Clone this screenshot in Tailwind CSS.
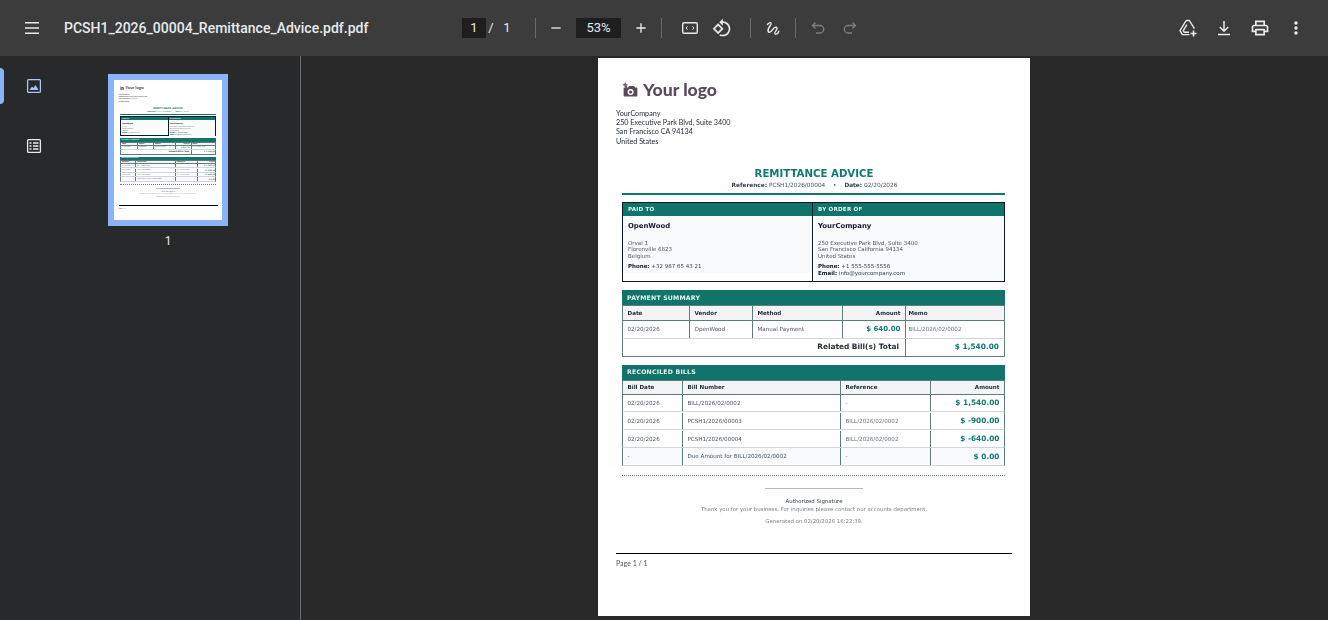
<!DOCTYPE html>
<html lang="en">
<head>
  <meta charset="UTF-8" />
  <title>PCSH1_2026_00004_Remittance_Advice.pdf.pdf</title>
  <script src="https://cdn.jsdelivr.net/npm/@tailwindcss/browser@4"></script>
</head>
<body class="h-[620px] w-[1328px] overflow-hidden bg-[#282828] font-['Roboto',sans-serif] text-[#e8eaed]">

  <!-- Toolbar -->
  <header class="flex h-[56px] items-center bg-[#3c3c3c]">
    <svg class="ml-[20px] h-[24px] w-[24px] fill-[#e8eaed]" viewBox="0 0 24 24"><path d="M5 18h14v-1.5H5V18zm0-5.2h14v-1.5H5v1.5zM5 6v1.5h14V6H5z"/></svg>
    <div class="ml-[20px] w-[398px] text-[14px] font-medium whitespace-nowrap">PCSH1_2026_00004_Remittance_Advice.pdf.pdf</div>

    <div class="flex h-[20px] w-[24px] items-center justify-center bg-[#1e1e1e] text-[13px]">1</div>
    <span class="w-[10px] text-center text-[13px]">/</span>
    <span class="ml-[6px] w-[10px] text-center text-[13px]">1</span>
    <div class="ml-[23px] h-[20px] w-px bg-[#6a6a6a]"></div>

    <svg class="ml-[12px] h-[16px] w-[16px] fill-[#e8eaed]" viewBox="0 0 24 24"><path d="M19 13H5v-2h14v2z"/></svg>
    <div class="ml-[12px] flex h-[20px] w-[45px] items-center justify-center bg-[#1e1e1e] text-[13px]">53%</div>
    <svg class="ml-[12px] h-[16px] w-[16px] fill-[#e8eaed]" viewBox="0 0 24 24"><path d="M19 13h-6v6h-2v-6H5v-2h6V5h2v6h6v2z"/></svg>
    <div class="ml-[12px] h-[20px] w-px bg-[#6a6a6a]"></div>

    <svg class="ml-[19px] h-[18px] w-[18px] text-[#e8eaed]" viewBox="0 0 18 18" fill="none" stroke="currentColor"><rect x="1.7" y="3.7" width="14.6" height="10.6" rx="1.4" stroke-width="1.4"/><path d="M6.6 7.4 5 9l1.6 1.6M11.4 7.4 13 9l-1.6 1.6" stroke-width="1"/></svg>
    <svg class="ml-[13px] h-[20px] w-[20px] fill-[#e8eaed]" viewBox="0 0 24 24"><path d="M7.34 6.41L.86 12.9l6.49 6.48 6.49-6.48-6.5-6.49zM3.69 12.9l3.66-3.66L11 12.9l-3.66 3.66-3.65-3.66zm15.67-6.26C17.61 4.88 15.3 4 13 4V.76L8.76 5 13 9.24V6c1.79 0 3.58.68 4.95 2.05 2.73 2.73 2.73 7.17 0 9.9C16.58 19.32 14.79 20 13 20c-.97 0-1.94-.21-2.84-.61l-1.49 1.49C10.02 21.62 11.51 22 13 22c2.3 0 4.61-.88 6.36-2.64 3.52-3.51 3.52-9.21 0-12.72z"/></svg>
    <div class="ml-[18px] h-[20px] w-px bg-[#6a6a6a]"></div>

    <svg class="ml-[13px] h-[18px] w-[18px] text-[#e8eaed]" viewBox="0 0 18 18" fill="none" stroke="currentColor" stroke-width="1.4" stroke-linecap="round"><path d="M3.5 5.5c1.2-1.6 3-2.4 3.6-1.4.9 1.5-4 5-3 8.2.7 2.1 3.4.3 5-2.2 1-1.6 3.2-2.5 3.9-1 .6 1.5-2.8 4-2.2 5.4.6 1.3 3.6.5 4-2.3"/></svg>
    <div class="ml-[13px] h-[20px] w-px bg-[#6a6a6a]"></div>

    <svg class="ml-[14px] h-[16px] w-[16px] text-[#7f7f7f]" viewBox="0 0 16 16" fill="none" stroke="currentColor" stroke-width="1.3"><path d="M5.5 2.5 2.5 5.5l3 3M2.5 5.5H10a3.6 3.6 0 0 1 0 7.5H6"/></svg>
    <svg class="ml-[16px] h-[16px] w-[16px] text-[#7f7f7f]" viewBox="0 0 16 16" fill="none" stroke="currentColor" stroke-width="1.3"><path d="M10.5 2.5l3 3-3 3M13.5 5.5H6a3.6 3.6 0 0 0 0 7.5h4"/></svg>

    <svg class="ml-[320px] h-[20px] w-[20px] text-[#e8eaed]" viewBox="0 0 20 20" fill="none" stroke="currentColor" stroke-width="1.4" stroke-linejoin="round"><path d="M8.2 2.5h3.2l5 8.2M8.2 2.5 2 12.6l2.4 4h7M8.8 6.6l-3.5 6 1 1.7H11"/><path d="M15.5 12.5v6M12.5 15.5h6" stroke-width="1.6"/></svg>
    <svg class="ml-[16px] h-[20px] w-[20px] text-[#e8eaed]" viewBox="0 0 20 20" fill="none" stroke="currentColor" stroke-width="1.5"><path d="M10 3v10M5.8 9 10 13.2 14.2 9M4 16.5h12"/></svg>
    <svg class="ml-[16px] h-[20px] w-[20px] fill-[#e8eaed]" viewBox="0 0 24 24"><path d="M19 8h-1V3H6v5H5c-1.66 0-3 1.34-3 3v6h4v4h12v-4h4v-6c0-1.66-1.34-3-3-3zM8 5h8v3H8V5zm8 12v2H8v-4h8v2zm2-2v-2H6v2H4v-4c0-.55.45-1 1-1h14c.55 0 1 .45 1 1v4h-2z"/></svg>
    <svg class="ml-[16px] h-[20px] w-[20px] fill-[#e8eaed]" viewBox="0 0 24 24"><path d="M12 8c1.1 0 2-.9 2-2s-.9-2-2-2-2 .9-2 2 .9 2 2 2zm0 2c-1.1 0-2 .9-2 2s.9 2 2 2 2-.9 2-2-.9-2-2-2zm0 6c-1.1 0-2 .9-2 2s.9 2 2 2 2-.9 2-2-.9-2-2-2z"/></svg>
  </header>

  <div class="flex h-[564px]">
    <!-- Sidebar -->
    <aside class="flex w-[301px] shrink-0 border-r border-[#6b6b6b] bg-[#28292a]">
      <div class="relative w-[68px] shrink-0">
        <div class="absolute top-[12px] left-0 h-[36px] w-[4px] rounded-r bg-[#8ab4f8]"></div>
        <svg class="absolute top-[22px] left-[26px] h-[16px] w-[16px] text-[#a8c7fa]" viewBox="0 0 16 16" fill="none" stroke="currentColor" stroke-width="1.3"><rect x="1.6" y="1.6" width="12.8" height="12.8" rx="1"/><path class="fill-[#a8c7fa]" stroke="none" d="M3.5 12 6 8.5l1.5 1.6L9.5 7l3 5z"/></svg>
        <svg class="absolute top-[82px] left-[26px] h-[16px] w-[16px] text-[#e8eaed]" viewBox="0 0 16 16" fill="none" stroke="currentColor" stroke-width="1.3"><rect x="1.6" y="1.6" width="12.8" height="12.8" rx="1"/><path d="M3.5 5h2M7 5h5.5M3.5 8h2M7 8h5.5M3.5 11h2M7 11h5.5"/></svg>
      </div>
      <div class="ml-[40px] pt-[18px]">
        <div class="h-[152px] w-[120px] border-[6px] border-[#8ab4f8] bg-white">
          <div id="thumb" class="h-[140px] w-[108px] overflow-hidden"></div>
        </div>
        <div class="mt-[6px] text-center text-[12px]">1</div>
      </div>
    </aside>

    <!-- Page -->
    <main class="flex-1 pt-[2px] pl-[297px]">
      <div id="sheet" class="h-[558px] w-[432px] overflow-hidden bg-white pt-[23px] font-['DejaVu_Sans',sans-serif] text-[#374151] blur-[0.3px]">
        <div class="ml-[24px] flex h-[18px] items-center font-['Lato',sans-serif] text-[17.6px] leading-none font-black text-[#5a4a5e]">
          <svg class="h-[16px] w-[16px] fill-[#5a4a5e]" viewBox="0 0 16 16"><path d="M2.6 0.6h1.2V2.2h1.6v1.2H3.8V5H2.6V3.4H1V2.2h1.6z"/><path fill-rule="evenodd" d="M1.6 5.6h1.6l1-2h.6v1.8h1.6L7 4h5l1 1.6h1.4c.6 0 1 .5 1 1v7c0 .6-.4 1-1 1H2.6c-.6 0-1-.4-1-1zM8.6 7a3 3 0 1 0 0 6 3 3 0 0 0 0-6zm0 1.4a1.6 1.6 0 1 1 0 3.2 1.6 1.6 0 0 1 0-3.2z"/></svg>
          <span class="ml-[5px]">Your logo</span>
        </div>

        <div class="mt-[10px] ml-[18px] font-['Lato',sans-serif] text-[7.2px] leading-[9.2px] text-[#1f2937]">
          <div>YourCompany</div>
          <div>250 Executive Park Blvd, Suite 3400</div>
          <div>San Francisco CA 94134</div>
          <div>United States</div>
        </div>

        <div class="mt-[22px] text-center text-[10.2px] leading-[12px] font-bold text-[#0f7a70]">REMITTANCE ADVICE</div>
        <div class="mt-[1px] pl-[1px] text-center text-[5.8px] leading-[8px] text-[#4b5563]"><b class="text-[#374151]">Reference:</b> PCSH1/2026/00004 <span class="mx-[6px]">•</span> <b class="text-[#374151]">Date:</b> 02/20/2026</div>

        <div class="mt-[4px] mr-[25px] ml-[24px] h-[2px] bg-[#0f766e]"></div>

        <!-- Parties -->
        <div class="mt-[7px] mr-[25px] ml-[24px] flex h-[80px] border border-[#111827] text-[5.5px] leading-[6.6px]">
          <div class="w-[190px] border-r border-[#111827]">
            <div class="flex h-[13px] items-center bg-[#11746b] pl-[5px] text-[5.6px] font-bold tracking-[0.2px] text-[#e6f4f1]">PAID TO</div>
            <div class="h-[57px] bg-[#f8fafc] pt-[6px] pl-[5px]">
              <div class="text-[6.9px] leading-[9px] font-bold text-[#111827]">OpenWood</div>
              <div class="mt-[9px] text-[#4b5563]">Orval 1<br>Florenville 6823<br>Belgium</div>
              <div class="mt-[3px] leading-[7px] text-[#374151]"><b class="text-[#111827]">Phone:</b> +32 987 65 43 21</div>
            </div>
          </div>
          <div class="flex-1">
            <div class="flex h-[13px] items-center bg-[#11746b] pl-[5px] text-[5.6px] font-bold tracking-[0.2px] text-[#e6f4f1]">BY ORDER OF</div>
            <div class="h-[65px] bg-[#f8fafc] pt-[6px] pl-[5px]">
              <div class="text-[6.9px] leading-[9px] font-bold text-[#111827]">YourCompany</div>
              <div class="mt-[9px] text-[#4b5563]">250 Executive Park Blvd, Suite 3400<br>San Francisco California 94134<br>United States</div>
              <div class="mt-[3px] leading-[7px] text-[#374151]"><b class="text-[#111827]">Phone:</b> +1 555-555-5556<br><b class="text-[#111827]">Email:</b> info@yourcompany.com</div>
            </div>
          </div>
        </div>

        <!-- Payment summary -->
        <div class="mt-[8px] mr-[25px] ml-[24px] text-[5.6px]">
          <div class="flex h-[15px] items-center bg-[#11746b] pl-[5px] text-[6.2px] font-bold tracking-[0.2px] text-[#e6f4f1]">PAYMENT SUMMARY</div>
          <div class="grid h-[16px] grid-cols-[67px_63px_90px_63px_98px] border-x border-y border-[#5f7d78] bg-[#f3f4f6] font-bold text-[#1f2937] *:flex *:items-center *:border-r *:border-[#5f7d78] *:px-[4.5px] *:last:border-r-0 *:last:pl-[2.5px]">
            <div>Date</div><div>Vendor</div><div>Method</div><div class="justify-end">Amount</div><div>Memo</div>
          </div>
          <div class="grid h-[18px] grid-cols-[67px_63px_90px_63px_98px] border-x border-b border-x-[#5f7d78] border-b-[#d1d5db] text-[#4b5563] *:flex *:items-center *:border-r *:border-[#5f7d78] *:px-[4.5px] *:last:border-r-0 *:last:pl-[2.5px]">
            <div>02/20/2026</div><div>OpenWood</div><div>Manual Payment</div><div class="justify-end text-[7px] font-bold text-[#0f7a70]">$ 640.00</div><div class="text-[#6b7280]">BILL/2026/02/0002</div>
          </div>
          <div class="grid h-[18px] grid-cols-[283px_98px] border-x border-b border-[#5f7d78] *:flex *:items-center *:justify-end">
            <div class="border-r border-[#5f7d78] pr-[6px] pb-[1px] text-[7.4px] font-bold text-[#1f2937]">Related Bill(s) Total</div>
            <div class="pr-[5px] pb-[1px] text-[7.4px] font-bold text-[#0f7a70]">$ 1,540.00</div>
          </div>
        </div>

        <!-- Reconciled bills -->
        <div class="mt-[8px] mr-[25px] ml-[24px] text-[5.6px]">
          <div class="flex h-[15px] items-center bg-[#11746b] pb-[1px] pl-[5px] text-[6.2px] font-bold tracking-[0.2px] text-[#e6f4f1]">RECONCILED BILLS</div>
          <div class="grid h-[15px] grid-cols-[60px_158px_90px_73px] border-x border-y border-[#5f7d78] bg-[#f3f4f6] font-bold text-[#1f2937] *:flex *:items-center *:border-r *:border-[#5f7d78] *:px-[4.5px] *:last:border-r-0">
            <div>Bill Date</div><div>Bill Number</div><div>Reference</div><div class="justify-end">Amount</div>
          </div>
          <div class="grid h-[17px] grid-cols-[60px_158px_90px_73px] border-x border-b border-x-[#5f7d78] border-b-[#d1d5db] text-[#4b5563] *:flex *:items-center *:border-r *:border-[#5f7d78] *:px-[4.5px] *:last:border-r-0">
            <div>02/20/2026</div><div>BILL/2026/02/0002</div><div class="text-[#6b7280]">-</div><div class="justify-end text-[7.4px] font-bold text-[#0f7a70]">$ 1,540.00</div>
          </div>
          <div class="grid h-[18px] grid-cols-[60px_158px_90px_73px] border-x border-b border-x-[#5f7d78] border-b-[#d1d5db] pt-[1px] text-[#4b5563] *:flex *:items-center *:border-r *:border-[#5f7d78] *:px-[4.5px] *:last:border-r-0">
            <div>02/20/2026</div><div>PCSH1/2026/00003</div><div class="text-[#6b7280]">BILL/2026/02/0002</div><div class="justify-end text-[7.4px] font-bold text-[#0f7a70]">$ -900.00</div>
          </div>
          <div class="grid h-[18px] grid-cols-[60px_158px_90px_73px] border-x border-b border-x-[#5f7d78] border-b-[#d1d5db] pt-[1px] text-[#4b5563] *:flex *:items-center *:border-r *:border-[#5f7d78] *:px-[4.5px] *:last:border-r-0">
            <div>02/20/2026</div><div>PCSH1/2026/00004</div><div class="text-[#6b7280]">BILL/2026/02/0002</div><div class="justify-end text-[7.4px] font-bold text-[#0f7a70]">$ -640.00</div>
          </div>
          <div class="grid h-[18px] grid-cols-[60px_158px_90px_73px] border-x border-b border-x-[#5f7d78] border-b-[#d1d5db] bg-[#f8fafc] text-[#4b5563] *:flex *:items-center *:border-r *:border-[#5f7d78] *:px-[4.5px] *:last:border-r-0">
            <div>-</div><div>Due Amount for BILL/2026/02/0002</div><div class="text-[#6b7280]">-</div><div class="justify-end text-[7.4px] font-bold text-[#0f7a70]">$ 0.00</div>
          </div>
        </div>

        <div class="mt-[9px] mr-[25px] ml-[24px] border-t border-dotted border-[#6b7280]"></div>

        <!-- Signature -->
        <div class="mx-auto mt-[12px] w-[98px] border-t border-[#b4b8be]"></div>
        <div class="mt-[9px] text-center text-[5.4px] leading-[7px] text-[#374151]">Authorized Signature</div>
        <div class="mt-[1px] text-center text-[5.4px] leading-[7px] text-[#7b8490]">Thank you for your business. For inquiries please contact our accounts department.</div>
        <div class="mt-[5px] text-center text-[5.4px] leading-[7px] text-[#7b8490]">Generated on 02/20/2026 16:22:39.</div>

        <div class="mx-[18px] mt-[28px] border-t border-black"></div>
        <div class="mt-[5px] ml-[18px] font-['Lato',sans-serif] text-[7px] leading-[9px] text-[#4b5563]">Page 1 / 1</div>
      </div>
    </main>
  </div>

  <script>
    // thumbnail is the same sheet at a quarter of its size; zoom keeps the borders solid
    var copy = document.getElementById('sheet').cloneNode(true);
    copy.removeAttribute('id');
    copy.classList.add('[zoom:0.25]', 'blur-none');
    copy.classList.remove('blur-[0.3px]');
    document.getElementById('thumb').appendChild(copy);
  </script>
</body>
</html>
